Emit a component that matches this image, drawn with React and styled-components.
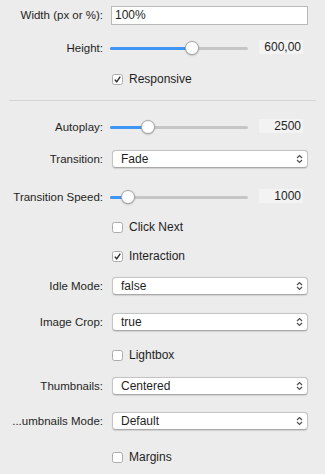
import React from "react";
import styled, { createGlobalStyle } from "styled-components";

const GlobalStyle = createGlobalStyle`
    html, body {
        margin: 0;
        padding: 0;
        background: #ececec;
    }
    body {
        font-family: "Liberation Sans", Helvetica, Arial, sans-serif;
        font-size: 11.5px;
        color: #1f1f1f;
    }
`;

const Panel = styled.div`
    width: 325px;
    height: 474px;
    padding-top: 5px;
    box-sizing: border-box;
    display: flex;
    flex-direction: column;
`;

const Row = styled.div`
    display: grid;
    grid-template-columns: 103px 1fr;
    column-gap: 8px;
    align-items: center;
    height: 20px;
    margin-top: ${(p) => p.$mt || 0}px;
    padding-right: 18px;
`;

const Label = styled.div`
    text-align: right;
    white-space: nowrap;
`;

const Control = styled.div`
    display: flex;
    align-items: center;
    min-width: 0;
`;

const TextInput = styled.div`
    flex: 1;
    height: 19px;
    margin-right: -1px;
    box-sizing: border-box;
    border: 1px solid #b9b9b9;
    background: #fff;
    padding-left: 3px;
    display: flex;
    align-items: center;
    font-size: 12px;
`;

const SliderBox = styled.div`
    position: relative;
    width: 138px;
    height: 3px;
    margin-left: -1px;
    border-radius: 2px;
    background: #c6c6c6;
`;

const Fill = styled.div`
    height: 100%;
    border-radius: 2px;
    background: #3d95f6;
`;

const Thumb = styled.div`
    position: absolute;
    top: 50%;
    width: 12px;
    height: 12px;
    margin: -7px 0 0 -6px;
    border-radius: 50%;
    background: #fff;
    border: 0.5px solid #a9a9a9;
    box-shadow: 0 0.5px 1.5px rgba(0, 0, 0, 0.3);
`;

const ValueBox = styled.div`
    margin-left: auto;
    margin-right: 4px;
    width: 44px;
    height: 14px;
    margin-top: -3px;
    background: #f3f3f3;
    text-align: right;
    line-height: 14px;
    padding-right: 2px;
    box-sizing: border-box;
    font-size: 12px;
`;

const SelectBox = styled.div`
    flex: 1;
    height: 18px;
    margin-left: 1px;
    margin-right: -1px;
    box-sizing: border-box;
    background: #fff;
    border: 0.5px solid #c4c4c4;
    border-bottom-color: #a9a9a9;
    border-radius: 4px;
    box-shadow: 0 0.5px 1px rgba(0, 0, 0, 0.12);
    display: flex;
    align-items: center;
    padding: 0 4px 0 8px;
    font-size: 12px;
`;

const SelectText = styled.span`
    flex: 1;
`;

const CheckLine = styled.label`
    display: flex;
    align-items: center;
    gap: 6px;
    font-size: 12px;
`;

const Box = styled.span`
    width: 11px;
    height: 11px;
    margin-left: 1px;
    box-sizing: border-box;
    border: 1px solid #acacac;
    border-radius: 2.5px;
    background: #fff;
    display: flex;
    align-items: center;
    justify-content: center;
`;

const Separator = styled.div`
    height: 1px;
    margin: 11px 9px 0 9px;
    background: #d5d5d5;
`;

const Slider = ({ value }) => (
    <SliderBox>
        <Fill style={{ width: `${value}%` }} />
        <Thumb style={{ left: `${value}%` }} />
    </SliderBox>
);

const Chevrons = () => (
    <svg width="7" height="10" viewBox="0 0 7 10">
        <path d="M1 4 L3.5 1.5 L6 4 M1 6 L3.5 8.5 L6 6" fill="none" stroke="#4a4a4a" strokeWidth="1.1" />
    </svg>
);

const Select = ({ value }) => (
    <SelectBox>
        <SelectText>{value}</SelectText>
        <Chevrons />
    </SelectBox>
);

const Checkbox = ({ checked, children }) => (
    <CheckLine>
        <Box>
            {checked && (
                <svg width="9" height="9" viewBox="0 0 9 9">
                    <path d="M1.8 4.6 L3.7 6.8 L7.3 1.6" fill="none" stroke="#2b2b2b" strokeWidth="1.4" />
                </svg>
            )}
        </Box>
        {children}
    </CheckLine>
);

const App = () => {
    return (
        <Panel>
            <GlobalStyle />
            <Row>
                <Label>Width (px or %):</Label>
                <Control><TextInput>100%</TextInput></Control>
            </Row>
            <Row $mt={13}>
                <Label>Height:</Label>
                <Control>
                    <Slider value={59} />
                    <ValueBox>600,00</ValueBox>
                </Control>
            </Row>
            <Row $mt={11}>
                <span />
                <Control><Checkbox checked>Responsive</Checkbox></Control>
            </Row>
            <Separator />
            <Row $mt={16}>
                <Label>Autoplay:</Label>
                <Control>
                    <Slider value={27} />
                    <ValueBox>2500</ValueBox>
                </Control>
            </Row>
            <Row $mt={12}>
                <Label>Transition:</Label>
                <Control><Select value="Fade" /></Control>
            </Row>
            <Row $mt={18}>
                <Label>Transition Speed:</Label>
                <Control>
                    <Slider value={12} />
                    <ValueBox>1000</ValueBox>
                </Control>
            </Row>
            <Row $mt={10}>
                <span />
                <Control><Checkbox>Click Next</Checkbox></Control>
            </Row>
            <Row $mt={9}>
                <span />
                <Control><Checkbox checked>Interaction</Checkbox></Control>
            </Row>
            <Row $mt={10}>
                <Label>Idle Mode:</Label>
                <Control><Select value="false" /></Control>
            </Row>
            <Row $mt={16}>
                <Label>Image Crop:</Label>
                <Control><Select value="true" /></Control>
            </Row>
            <Row $mt={13}>
                <span />
                <Control><Checkbox>Lightbox</Checkbox></Control>
            </Row>
            <Row $mt={11}>
                <Label>Thumbnails:</Label>
                <Control><Select value="Centered" /></Control>
            </Row>
            <Row $mt={15}>
                <Label>...umbnails Mode:</Label>
                <Control><Select value="Default" /></Control>
            </Row>
            <Row $mt={16}>
                <span />
                <Control><Checkbox>Margins</Checkbox></Control>
            </Row>
        </Panel>
    );
};

export default App;
